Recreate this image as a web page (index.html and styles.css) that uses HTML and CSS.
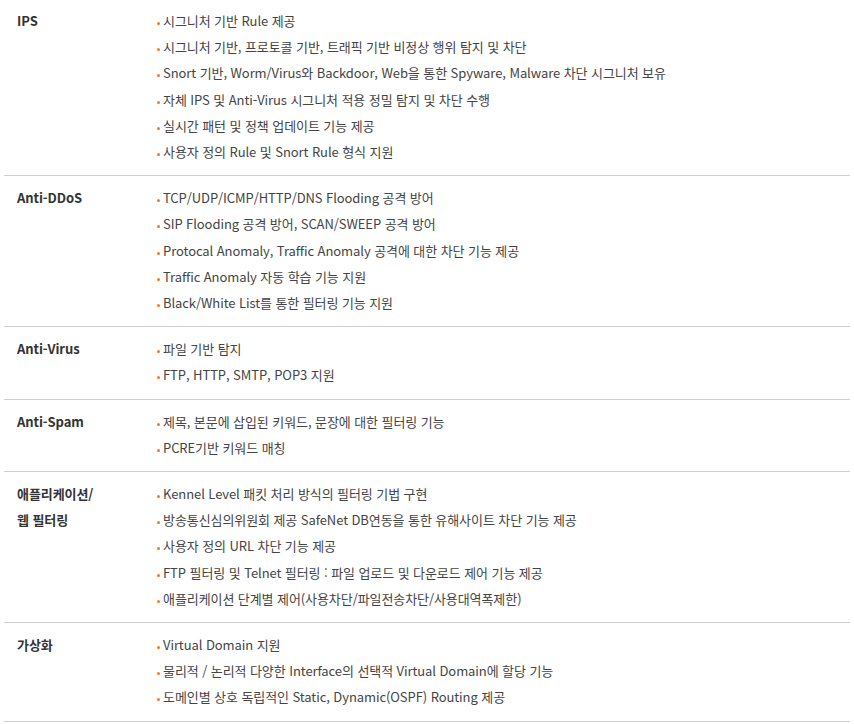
FILE: index.html
```html
<!DOCTYPE html>
<html lang="ko">
<head>
  <meta charset="UTF-8" />
  <title>주요 기능</title>
  <link rel="stylesheet" href="styles.css">
</head>
<body>

  <div class="spec">

    <!-- IPS -->
    <div class="spec-row">
      <div class="spec-title">IPS</div>
      <ul class="spec-list">
        <li>시그니처 기반 Rule 제공</li>
        <li>시그니처 기반, 프로토콜 기반, 트래픽 기반 비정상 행위 탐지 및 차단</li>
        <li>Snort 기반, Worm/Virus와 Backdoor, Web을 통한 Spyware, Malware 차단 시그니처 보유</li>
        <li>자체 IPS 및 Anti-Virus 시그니처 적용 정밀 탐지 및 차단 수행</li>
        <li>실시간 패턴 및 정책 업데이트 기능 제공</li>
        <li>사용자 정의 Rule 및 Snort Rule 형식 지원</li>
      </ul>
    </div>

    <!-- Anti-DDoS -->
    <div class="spec-row">
      <div class="spec-title">Anti-DDoS</div>
      <ul class="spec-list">
        <li>TCP/UDP/ICMP/HTTP/DNS Flooding 공격 방어</li>
        <li>SIP Flooding 공격 방어, SCAN/SWEEP 공격 방어</li>
        <li>Protocal Anomaly, Traffic Anomaly 공격에 대한 차단 기능 제공</li>
        <li>Traffic Anomaly 자동 학습 기능 지원</li>
        <li>Black/White List를 통한 필터링 기능 지원</li>
      </ul>
    </div>

    <!-- Anti-Virus -->
    <div class="spec-row">
      <div class="spec-title">Anti-Virus</div>
      <ul class="spec-list">
        <li>파일 기반 탐지</li>
        <li>FTP, HTTP, SMTP, POP3 지원</li>
      </ul>
    </div>

    <!-- Anti-Spam -->
    <div class="spec-row">
      <div class="spec-title">Anti-Spam</div>
      <ul class="spec-list">
        <li>제목, 본문에 삽입된 키워드, 문장에 대한 필터링 기능</li>
        <li>PCRE기반 키워드 매칭</li>
      </ul>
    </div>

    <!-- 애플리케이션/웹 필터링 -->
    <div class="spec-row">
      <div class="spec-title">애플리케이션/<br>웹 필터링</div>
      <ul class="spec-list">
        <li>Kennel Level 패킷 처리 방식의 필터링 기법 구현</li>
        <li>방송통신심의위원회 제공 SafeNet DB연동을 통한 유해사이트 차단 기능 제공</li>
        <li>사용자 정의 URL 차단 기능 제공</li>
        <li>FTP 필터링 및 Telnet 필터링 : 파일 업로드 및 다운로드 제어 기능 제공</li>
        <li>애플리케이션 단계별 제어(사용차단/파일전송차단/사용대역폭제한)</li>
      </ul>
    </div>

    <!-- 가상화 -->
    <div class="spec-row">
      <div class="spec-title">가상화</div>
      <ul class="spec-list">
        <li>Virtual Domain 지원</li>
        <li>물리적 / 논리적 다양한 Interface의 선택적 Virtual Domain에 할당 기능</li>
        <li>도메인별 상호 독립적인 Static, Dynamic(OSPF) Routing 제공</li>
      </ul>
    </div>

  </div>

</body>
</html>
```

FILE: styles.css
```css
* { box-sizing: border-box; }
body {
  margin: 0;
  padding: 0;
  background: #fff;
  font-family: "Noto Sans CJK KR", "Noto Sans", sans-serif;
  font-size: 13px;
  letter-spacing: -0.08px;
  color: #444;
}
.spec {
  width: 846px;
  margin-left: 4px;
}
.spec-row {
  display: flex;
  padding: 9px 0 10px;
  border-bottom: 1px solid #cfcfcf;
}
.spec-row:first-child { padding-top: 8px; }
.spec-title {
  width: 153px;
  flex-shrink: 0;
  padding-left: 13px;
  font-weight: bold;
  color: #333;
  line-height: 26.2px;
}
.spec-list {
  list-style: none;
  margin: 0;
  padding: 0;
  flex: 1;
}
.spec-list li {
  position: relative;
  padding-left: 6px;
  line-height: 26.2px;
}
.spec-list li::before {
  content: "";
  position: absolute;
  left: 0;
  top: 14px;
  width: 3px;
  height: 3px;
  border-radius: 50%;
  background: #f47920;
}
```
